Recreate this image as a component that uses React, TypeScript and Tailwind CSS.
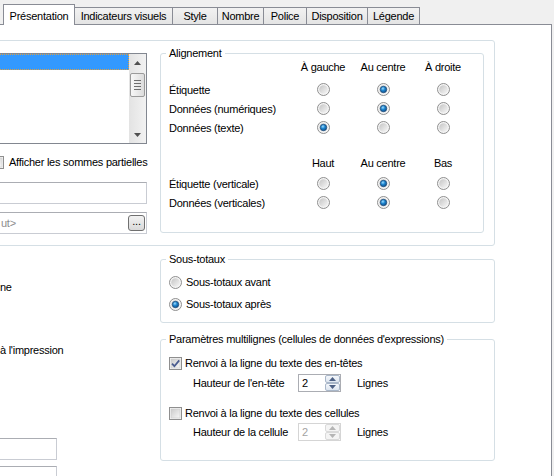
import React from 'react'

const tabs = [
  { label: 'Indicateurs visuels', w: 'w-[99px]' },
  { label: 'Style', w: 'w-[46px]' },
  { label: 'Nombre', w: 'w-[47px]' },
  { label: 'Police', w: 'w-[44px]' },
  { label: 'Disposition', w: 'w-[62px]' },
  { label: 'Légende', w: 'w-[53px]' },
]

function Radio({ checked }: { checked?: boolean }) {
  return (
    <svg width="13" height="13" viewBox="0 0 13 13" className="shrink-0">
      <defs>
        <linearGradient id="rbg" x1="0" y1="0" x2="1" y2="1">
          <stop offset="0" stopColor="#c4c4c4" />
          <stop offset="1" stopColor="#f7f7f7" />
        </linearGradient>
        <radialGradient id="rdot" cx="0.4" cy="0.35" r="0.7">
          <stop offset="0" stopColor="#9fdcff" />
          <stop offset="0.45" stopColor="#1d86d0" />
          <stop offset="1" stopColor="#0d4a86" />
        </radialGradient>
      </defs>
      <circle cx="6.5" cy="6.5" r="6" fill="#f4f4f4" stroke="#8f8f8f" />
      <circle cx="6.5" cy="6.5" r="4.3" fill="url(#rbg)" />
      {checked && <circle cx="6.5" cy="6.5" r="3.2" fill="url(#rdot)" stroke="#1f4e7c" strokeWidth="0.8" />}
    </svg>
  )
}

function Check({ checked }: { checked?: boolean }) {
  return (
    <svg width="13" height="13" viewBox="0 0 13 13" className="shrink-0">
      <defs>
        <linearGradient id="cbg" x1="0" y1="0" x2="1" y2="1">
          <stop offset="0" stopColor="#cbcbcb" />
          <stop offset="1" stopColor="#f8f8f8" />
        </linearGradient>
      </defs>
      <rect x="0.5" y="0.5" width="12" height="12" fill="#f6f6f6" stroke="#8f8f8f" />
      <rect x="2" y="2" width="9" height="9" fill="url(#cbg)" stroke="#c9c9c9" strokeWidth="0.6" />
      {checked && <path d="M3 6.6 L5.4 9.2 L10.2 3.4" fill="none" stroke="#4a5c8f" strokeWidth="1.8" />}
    </svg>
  )
}

function Arrow({ up, color = '#4d6185' }: { up?: boolean; color?: string }) {
  return (
    <svg width="7" height="4" viewBox="0 0 7 4">
      <path d={up ? 'M0 4 L3.5 0 L7 4 Z' : 'M0 0 L3.5 4 L7 0 Z'} fill={color} />
    </svg>
  )
}

function Spinner({ disabled }: { disabled?: boolean }) {
  const btn = disabled
    ? 'border-[#dadada] bg-[#f4f4f4]'
    : 'border-[#a9b7c9] bg-gradient-to-b from-[#f4f7fb] to-[#dde5ef]'
  return (
    <div className={`flex h-[18px] w-[43px] border bg-white ${disabled ? 'border-[#d5d5d5]' : 'border-[#abadb3]'}`}>
      <div className={`flex-1 pl-[3px] leading-[16px] ${disabled ? 'text-[#a3a3a3]' : ''}`}>2</div>
      <div className="flex w-[15px] flex-col">
        <div className={`flex h-[8px] items-center justify-center rounded-[2px] border ${btn}`}>
          <Arrow up color={disabled ? '#b5b5b5' : '#4d6185'} />
        </div>
        <div className={`flex h-[8px] items-center justify-center rounded-[2px] border ${btn}`}>
          <Arrow color={disabled ? '#b5b5b5' : '#4d6185'} />
        </div>
      </div>
    </div>
  )
}

function Legend({ children }: { children: React.ReactNode }) {
  return <div className="-mt-[7px] ml-[5px] w-fit bg-white px-[3px] leading-[13px]">{children}</div>
}

function AlignRow({ label, sel, top }: { label: string; sel: number; top: string }) {
  return (
    <div className={`grid h-[19px] grid-cols-[124px_60px_60px_60px] items-center pl-[8px] ${top}`}>
      <span>{label}</span>
      {[0, 1, 2].map((i) => (
        <span key={i} className="flex justify-center">
          <Radio checked={i === sel} />
        </span>
      ))}
    </div>
  )
}

function AlignHeader({ cols, top }: { cols: string[]; top: string }) {
  return (
    <div className={`grid h-[14px] grid-cols-[124px_60px_60px_60px] items-center pl-[8px] leading-[14px] ${top}`}>
      <span />
      {cols.map((c) => (
        <span key={c} className="text-center">
          {c}
        </span>
      ))}
    </div>
  )
}

export default function App() {
  return (
    <div
      className="h-[476px] w-[554px] overflow-hidden bg-[#f0f0f0] text-[11px] leading-[14px] tracking-[-0.25px] text-black"
      style={{ fontFamily: '"Liberation Sans", Arial, sans-serif' }}
    >
      {/* tab strip */}
      <div className="flex h-[24px] items-end pl-[3px]">
        <div className="relative z-10 -mb-px flex h-[21px] w-[72px] items-start justify-center border-x border-t border-[#898c95] bg-white pt-[4px]">
          Présentation
        </div>
        {tabs.map((t) => (
          <div
            key={t.label}
            className={`-ml-px flex h-[17px] ${t.w} items-center justify-center border-x border-t border-[#898c95] bg-gradient-to-b from-[#f2f2f2] to-[#e4e4e4]`}
          >
            {t.label}
          </div>
        ))}
      </div>

      {/* tab page */}
      <div className="h-[452px] w-[552px] overflow-hidden border-t border-r border-[#898c95] bg-white">
        <div className="-ml-[20px] mt-[15px] flex w-[515px] items-start rounded-[3px] border border-[#d5dfe5] pt-[12px] pb-[11px]">
          {/* left column */}
          <div className="flex w-[166px] flex-col">
            <div className="flex h-[91px] border border-[#828790] bg-white">
              <div className="flex-1">
                <div className="h-[16px] border border-dotted border-[#e0a040] bg-[#3399ff]" />
              </div>
              <div className="flex w-[17px] flex-col items-center bg-gradient-to-r from-[#e3e3e3] to-[#f2f2f2]">
                <div className="flex h-[17px] items-center justify-center">
                  <Arrow up color="#505050" />
                </div>
                <div className="mt-[2px] flex h-[24px] w-[15px] flex-col items-center justify-center gap-[2px] rounded-[2px] border border-[#9a9a9a] bg-gradient-to-r from-[#f7f7f7] to-[#dcdcdc]">
                  <div className="h-px w-[7px] bg-[#6e6e6e]" />
                  <div className="h-px w-[7px] bg-[#6e6e6e]" />
                  <div className="h-px w-[7px] bg-[#6e6e6e]" />
                  <div className="h-px w-[7px] bg-[#6e6e6e]" />
                </div>
                <div className="flex-1" />
                <div className="flex h-[17px] items-center justify-center">
                  <Arrow color="#505050" />
                </div>
              </div>
            </div>

            <div className="mt-[11px] ml-[10px] flex h-[14px] items-center gap-[5px] whitespace-nowrap">
              <Check />
              <span>Afficher les sommes partielles</span>
            </div>

            <div className="mt-[13px] h-[22px] border border-[#c9ccd3] border-t-[#abadb3] bg-white" />

            <div className="mt-[8px] flex h-[22px] items-center border border-[#c9ccd3] border-t-[#abadb3] bg-white pr-[1px]">
              <span className="flex-1 pl-[19px] text-[#8d8d8d]">ut&gt;</span>
              <div className="flex h-[16px] w-[17px] items-start justify-center rounded-[3px] border border-[#707070] bg-gradient-to-b from-[#f2f2f2] to-[#d9d9d9] leading-[10px]">
                ...
              </div>
            </div>
          </div>

          {/* Alignement */}
          <div className="ml-[13px] w-[324px] rounded-[3px] border border-[#d5dfe5] pb-[20px]">
            <Legend>Alignement</Legend>
            <AlignHeader cols={['À gauche', 'Au centre', 'À droite']} top="" />
            <AlignRow label="Étiquette" sel={1} top="mt-[6px]" />
            <AlignRow label="Données (numériques)" sel={1} top="" />
            <AlignRow label="Données (texte)" sel={0} top="" />
            <AlignHeader cols={['Haut', 'Au centre', 'Bas']} top="mt-[19px]" />
            <AlignRow label="Étiquette (verticale)" sel={1} top="mt-[4px]" />
            <AlignRow label="Données (verticales)" sel={1} top="" />
          </div>
        </div>

        <div className="flex">
          {/* left column, cut off */}
          <div className="flex w-[160px] flex-col">
            <div className="mt-[34px] h-[14px]">ne</div>
            <div className="mt-[49px] h-[14px]">à l'impression</div>
            <div className="mt-[81px] -ml-[10px] h-[22px] w-[67px] border border-[#c9ccd3] border-t-[#abadb3] bg-white" />
            <div className="mt-[6px] -ml-[10px] h-[22px] w-[67px] border border-[#c9ccd3] border-t-[#abadb3] bg-white" />
          </div>

          <div className="flex w-[335px] flex-col">
            {/* Sous-totaux */}
            <div className="mt-[13px] rounded-[3px] border border-[#d5dfe5] pb-[10px]">
              <Legend>Sous-totaux</Legend>
              <div className="mt-[8px] flex h-[16px] items-center gap-[4px] pl-[8px]">
                <Radio />
                <span>Sous-totaux avant</span>
              </div>
              <div className="mt-[6px] flex h-[16px] items-center gap-[4px] pl-[8px]">
                <Radio checked />
                <span>Sous-totaux après</span>
              </div>
            </div>

            {/* Paramètres multilignes */}
            <div className="mt-[16px] rounded-[3px] border border-[#d5dfe5] pb-[19px]">
              <Legend>Paramètres multilignes (cellules de données d'expressions)</Legend>
              <div className="mt-[9px] flex h-[16px] items-center gap-[3px] pl-[8px]">
                <Check checked />
                <span>Renvoi à la ligne du texte des en-têtes</span>
              </div>
              <div className="mt-[3px] flex h-[18px] items-center pl-[32px]">
                <span className="w-[105px]">Hauteur de l'en-tête</span>
                <Spinner />
                <span className="ml-[16px]">Lignes</span>
              </div>
              <div className="mt-[13px] flex h-[16px] items-center gap-[3px] pl-[8px]">
                <Check />
                <span>Renvoi à la ligne du texte des cellules</span>
              </div>
              <div className="mt-[2px] flex h-[18px] items-center pl-[32px]">
                <span className="w-[105px]">Hauteur de la cellule</span>
                <Spinner disabled />
                <span className="ml-[16px]">Lignes</span>
              </div>
            </div>
          </div>
        </div>
      </div>
    </div>
  )
}
